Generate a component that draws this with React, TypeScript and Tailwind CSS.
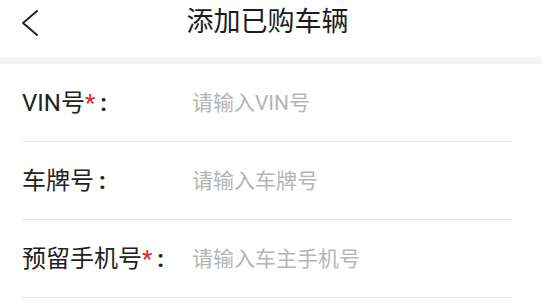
import React from "react";

const font = { fontFamily: '"Roboto", "Noto Sans CJK SC", sans-serif' };

const fields = [
  { label: "VIN号", required: true, placeholder: "请输入VIN号" },
  { label: "车牌号", required: false, placeholder: "请输入车牌号" },
  { label: "预留手机号", required: true, placeholder: "请输入车主手机号" },
];

const App = () => {
  return (
    <div className="w-[542px] h-[308px] bg-white overflow-hidden" style={font}>
      {/* Header */}
      <div className="h-[57px] pb-[12px] flex items-center">
        <div className="w-[60px] pl-[21px] flex items-center">
          <svg width="18" height="28" viewBox="0 0 18 28" fill="none">
            <polyline
              points="16,2 2,14 16,26"
              stroke="#222"
              strokeWidth="2"
              strokeLinecap="round"
              strokeLinejoin="round"
            />
          </svg>
        </div>
        <h1 className="flex-1 text-center text-[27px] leading-none text-[#1c1c1c] pr-[67px]">
          添加已购车辆
        </h1>
      </div>

      <div className="h-[7px] bg-[#f4f4f4]" />

      {/* Form */}
      <div className="ml-[22px] mr-[29px]">
        {fields.map((f) => (
          <div
            key={f.label}
            className="h-[78px] flex items-center border-b border-[#e9e9e9]"
          >
            <div className="w-[170px] text-[24px] leading-none text-[#222]">
              {f.label}
              {f.required && <span className="text-[#e5231b]">*</span>}
              <span className="ml-[5px] font-bold">:</span>
            </div>
            <input
              type="text"
              placeholder={f.placeholder}
              className="flex-1 text-[21px] leading-none outline-none placeholder:text-[#b5b5b5] bg-transparent"
              style={font}
            />
          </div>
        ))}
      </div>
    </div>
  );
};

export default App;
